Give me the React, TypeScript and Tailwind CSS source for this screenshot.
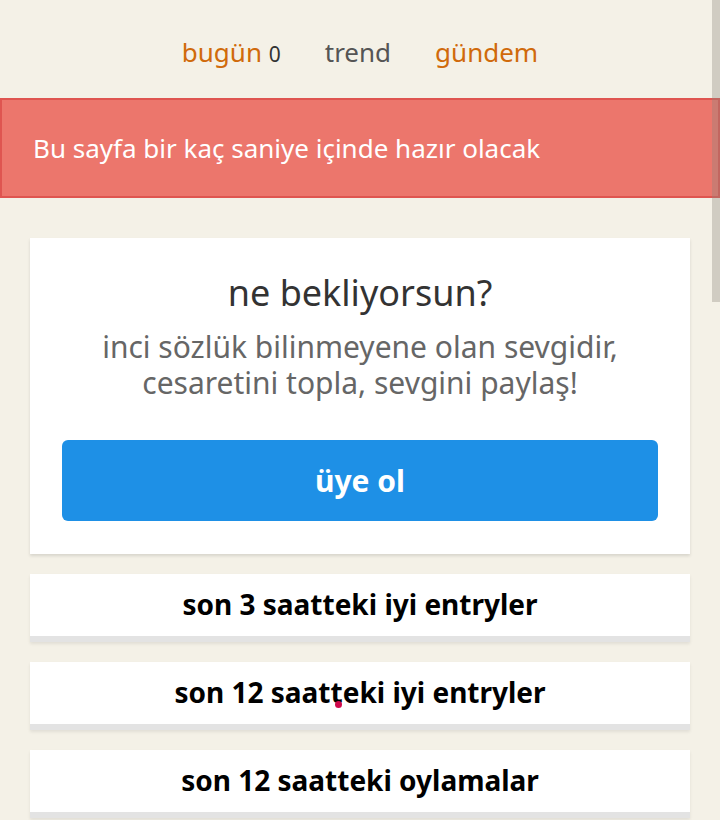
import React from "react";

const rows = [
  "son 3 saatteki iyi entryler",
  "son 12 saatteki iyi entryler",
  "son 12 saatteki oylamalar",
];

const App = () => {
  return (
    <div className="relative min-h-[820px] w-full overflow-hidden bg-[#f4f1e7] font-['Noto_Sans',sans-serif]">
      <nav className="flex h-[98px] items-center justify-center gap-[44px] pt-[6px] text-[26px]">
        <a className="text-[#d06a0b]">
          bugün <span className="text-[21px] text-[#333]">0</span>
        </a>
        <a className="text-[#555]">trend</a>
        <a className="text-[#d06a0b]">gündem</a>
      </nav>

      <div className="flex h-[100px] items-center border-2 border-[#df5550] bg-[#ec766c] px-[31px] text-[26px] text-white">
        Bu sayfa bir kaç saniye içinde hazır olacak
      </div>

      <main className="flex flex-col gap-5 px-[30px] pt-10">
        <section className="flex flex-col items-center bg-white px-8 pb-[33px] pt-[31px] text-center shadow-[0_2px_3px_rgba(0,0,0,0.12)]">
          <h2 className="text-[36px] leading-[48px] text-[#333]">ne bekliyorsun?</h2>
          <p className="mt-[12px] text-[30px] leading-[36px] text-[#666]">
            inci sözlük bilinmeyene olan sevgidir,
            <br />
            cesaretini topla, sevgini paylaş!
          </p>
          <button className="mt-[39px] h-[81px] w-full rounded-md bg-[#1e90e6] text-[30px] font-bold text-white">
            üye ol
          </button>
        </section>

        {rows.map((r) => (
          <div
            key={r}
            className="flex h-[68px] items-center justify-center border-b-[6px] border-[#e3e3e3] bg-white pb-[3px] text-[28px] font-bold text-black shadow-[0_2px_3px_rgba(0,0,0,0.08)]"
          >
            {r}
          </div>
        ))}
      </main>

      <div className="absolute right-0 top-0 h-[302px] w-[8px] bg-[rgba(140,135,125,0.35)]" />
      <div className="absolute left-[335px] top-[701px] h-[7px] w-[7px] rounded-full bg-[#d0084a]" />
    </div>
  );
};

export default App;
